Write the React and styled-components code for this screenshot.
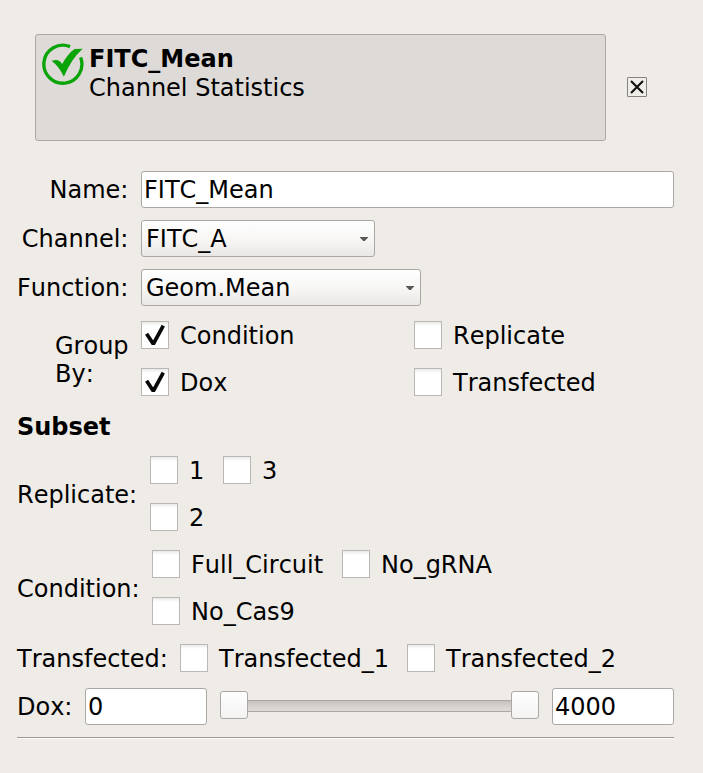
import React from "react";
import styled, { createGlobalStyle } from "styled-components";

const GlobalStyle = createGlobalStyle`
  * { box-sizing: border-box; }
  body {
    margin: 0;
    background: #efebe7;
    color: #000;
    font-family: "DejaVu Sans", sans-serif;
    font-size: 24px;
    line-height: 28px;
    font-kerning: none;
  }
`;

const Panel = styled.main`
  width: 703px;
  height: 773px;
  padding: 34px 29px 0 17px;
  background: #efebe7;
  overflow: hidden;
`;

const Header = styled.header`
  display: flex;
  align-items: center;
  gap: 21px;
  margin: 0 0 30px 18px;
`;

const HeaderCard = styled.div`
  display: flex;
  align-items: flex-start;
  width: 571px;
  height: 107px;
  padding: 8px 6px 0 6px;
  border: 1px solid #aba8a6;
  border-radius: 3px;
  background: #dedad7;
`;

const StatusIcon = styled.svg`
  flex: none;
  width: 42px;
  height: 42px;
  margin-right: 5px;
`;

const HeaderText = styled.div`
  padding-top: 2px;
  line-height: 29px;
`;

const Title = styled.div`
  font-weight: bold;
`;

const CloseButton = styled.button`
  display: flex;
  align-items: center;
  justify-content: center;
  width: 20px;
  height: 20px;
  margin-bottom: 1px;
  padding: 0;
  border: 1px solid #858381;
  border-radius: 1px;
  background: #f1eeea;
`;

const FormGrid = styled.div`
  display: grid;
  grid-template-columns: 112px 1fr;
  column-gap: 12px;
  row-gap: 12px;
  align-items: center;
`;

const Label = styled.label`
  justify-self: end;
  padding-right: 0.6px;
  white-space: nowrap;
`;

const GroupLabel = styled.div`
  justify-self: end;
  width: 74px;
  margin-top: 5px;
`;

const TextInput = styled.input`
  display: block;
  flex: none;
  width: ${(p) => p.$width};
  height: 37px;
  padding: 0 2px;
  border: 1px solid #aaa7a5;
  border-radius: 3px;
  outline: 0;
  background: #fff;
  color: #000;
  font: inherit;
  font-kerning: none;
`;

const Select = styled.button`
  display: flex;
  align-items: center;
  justify-content: space-between;
  width: ${(p) => p.$width};
  height: 37px;
  padding: 0 6px 0 4px;
  border: 1px solid #aaa7a5;
  border-radius: 3px;
  background: linear-gradient(#fefefe, #f8f7f6 50%, #eae8e6);
  color: #000;
  font: inherit;
  font-kerning: none;
`;

const GroupOptions = styled.div`
  display: grid;
  grid-template-columns: 273px 1fr;
  row-gap: 19px;
  margin-top: 3px;
`;

const CheckLabel = styled.label`
  display: flex;
  align-items: center;
  gap: 11px;
  height: 28px;
  white-space: nowrap;
`;

const CheckText = styled.span`
  padding-top: 2px;
`;

const Box = styled.span`
  display: flex;
  flex: none;
  width: 28px;
  height: 28px;
  border: 1px solid #bab7b4;
  background: linear-gradient(#e9e9e9, #fff 4px);
`;

const SubsetTitle = styled.h2`
  margin: 17px 0 15px;
  font-size: 24px;
  line-height: 28px;
`;

const SubsetRow = styled.div`
  display: flex;
  align-items: center;
  margin-bottom: ${(p) => p.$after};
`;

const SubsetLabel = styled.div`
  flex: none;
  width: ${(p) => p.$width};
  padding-top: ${(p) => p.$drop || 0};
  line-height: 26px;
  white-space: nowrap;
`;

const SubsetOptions = styled.div`
  display: grid;
  grid-template-columns: ${(p) => p.$first} auto;
  row-gap: 19px;
`;

const Range = styled.div`
  display: flex;
  flex: none;
  align-items: center;
  width: 319px;
  height: 28px;
  margin: 0 13px 3px;
`;

const Track = styled.div`
  flex: 1;
  height: 12px;
  margin-top: 2px;
  border: solid #aaa7a4;
  border-width: 1px 0;
  background: linear-gradient(#c5c2bf, #d9d6d3 70%, #dcd9d6);
`;

const Handle = styled.div`
  width: 28px;
  height: 28px;
  border: 1px solid #aba8a6;
  border-radius: 3px;
  background: linear-gradient(#fff, #f4f2f1);
`;

const Divider = styled.hr`
  height: 2px;
  margin: 0;
  border: 0;
  border-top: 1px solid #9c9996;
  background: #fcfbfa;
`;

function Dropdown({ value, width }) {
  return (
    <Select $width={width}>
      {value}
      <svg width="8" height="4" viewBox="0 0 8 4">
        <path d="M0 0H8V0.6L4.8 4H3.2L0 0.6Z" fill="#5b5958" />
      </svg>
    </Select>
  );
}

function Check({ label, checked }) {
  return (
    <CheckLabel>
      <Box>
        {checked && (
          <svg width="26" height="26" viewBox="0 0 26 26">
            <path
              d="M4.6 11.8L11.3 22L21.3 3.6"
              fill="none"
              stroke="#080808"
              strokeWidth="3.7"
              strokeLinejoin="bevel"
            />
          </svg>
        )}
      </Box>
      <CheckText>{label}</CheckText>
    </CheckLabel>
  );
}

export default function App() {
  return (
    <>
      <GlobalStyle />
      <Panel>
        <Header>
          <HeaderCard>
            <StatusIcon viewBox="0 0 42 42">
              <path
                d="M28 3.6A19 19 0 1 0 38.6 14.4"
                fill="none"
                stroke="#08a408"
                strokeWidth="3.3"
              />
              <path
                d="M11 18.2C14 17 17.6 17.6 20.2 22.3C24.2 15 28.5 9.5 33 6.6L39 6.4C31.8 13 26.4 21.5 21.8 32.2C19 26.5 15.5 21.5 11 18.2Z"
                fill="#08a408"
                stroke="#08a408"
                strokeWidth="1.3"
              />
            </StatusIcon>
            <HeaderText>
              <Title>FITC_Mean</Title>
              <div>Channel Statistics</div>
            </HeaderText>
          </HeaderCard>
          <CloseButton aria-label="Remove">
            <svg width="18" height="18" viewBox="0 0 18 18">
              <path d="M3 3L15 15M15 3L3 15" stroke="#101010" strokeWidth="2.1" />
            </svg>
          </CloseButton>
        </Header>

        <FormGrid>
          <Label>Name:</Label>
          <TextInput $width="533px" defaultValue="FITC_Mean" />
          <Label>Channel:</Label>
          <Dropdown value="FITC_A" width="234px" />
          <Label>Function:</Label>
          <Dropdown value="Geom.Mean" width="280px" />
          <GroupLabel>Group By:</GroupLabel>
          <GroupOptions>
            <Check label="Condition" checked />
            <Check label="Replicate" />
            <Check label="Dox" checked />
            <Check label="Transfected" />
          </GroupOptions>
        </FormGrid>

        <SubsetTitle>Subset</SubsetTitle>

        <SubsetRow $after="19px">
          <SubsetLabel $width="133px" $drop="2px">Replicate:</SubsetLabel>
          <SubsetOptions $first="73px">
            <Check label="1" />
            <Check label="3" />
            <Check label="2" />
          </SubsetOptions>
        </SubsetRow>
        <SubsetRow $after="19px">
          <SubsetLabel $width="135px" $drop="2px">Condition:</SubsetLabel>
          <SubsetOptions $first="190px">
            <Check label="Full_Circuit" />
            <Check label="No_gRNA" />
            <Check label="No_Cas9" />
          </SubsetOptions>
        </SubsetRow>
        <SubsetRow $after="16px">
          <SubsetLabel $width="163px" $drop="2px">Transfected:</SubsetLabel>
          <SubsetOptions $first="227px">
            <Check label="Transfected_1" />
            <Check label="Transfected_2" />
          </SubsetOptions>
        </SubsetRow>
        <SubsetRow $after="12px">
          <SubsetLabel $width="68px">Dox:</SubsetLabel>
          <TextInput $width="122px" defaultValue="0" />
          <Range>
            <Handle />
            <Track />
            <Handle />
          </Range>
          <TextInput $width="122px" defaultValue="4000" />
        </SubsetRow>
        <Divider />
      </Panel>
    </>
  );
}
